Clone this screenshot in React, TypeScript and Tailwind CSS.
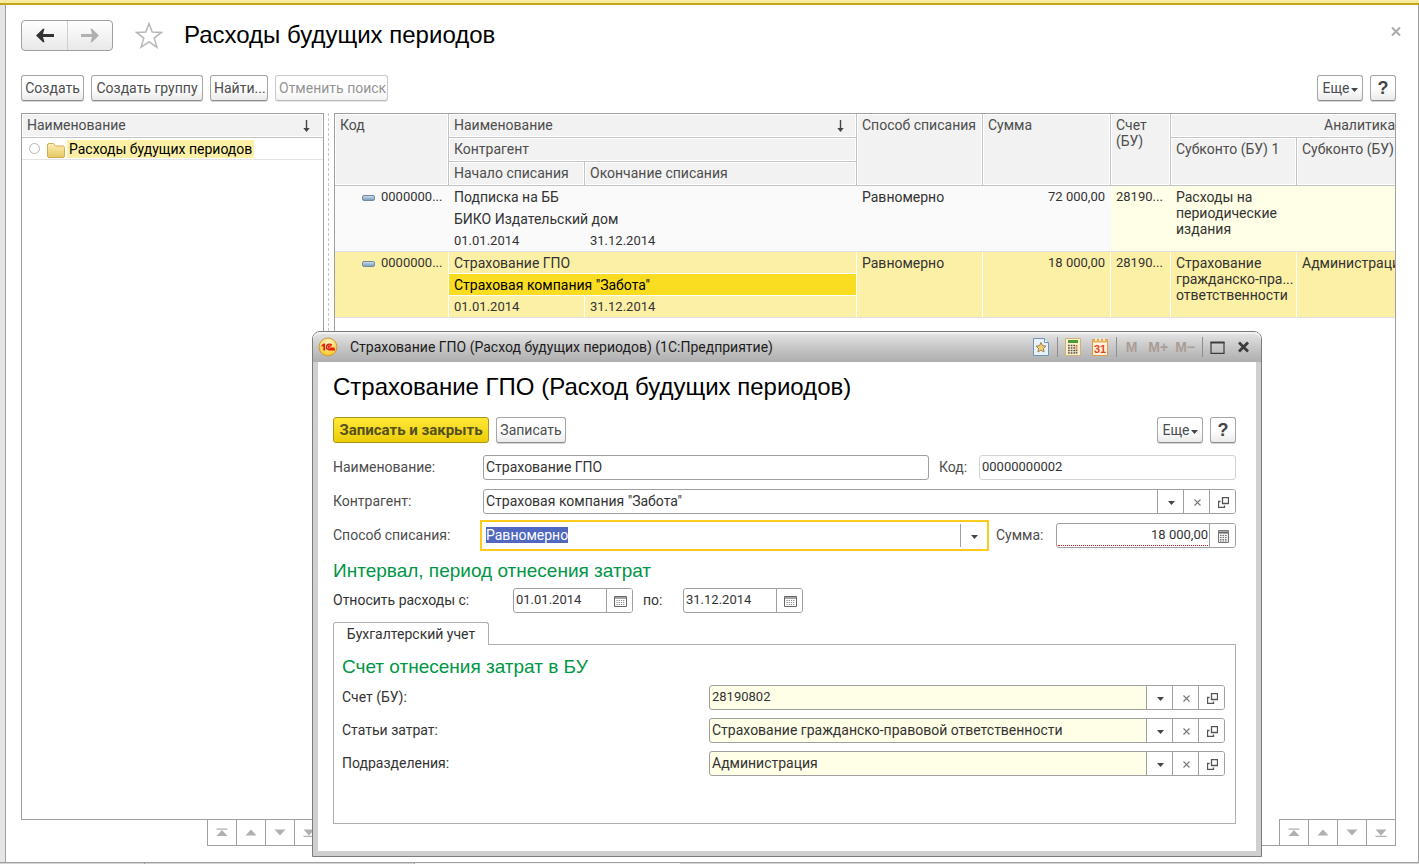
import { useEffect, useRef } from "react";
import type { ReactNode } from "react";

const toolButton =
  "h-[26px] shrink-0 whitespace-nowrap rounded-[3px] border border-[#a6a6a6] border-b-[#8e8e8e] bg-linear-to-b from-white from-50% to-[#ebebeb] px-[3px] text-[14px] leading-4 text-[#4d4d4d] shadow-[0_1px_0_#d4d4d4]";

const headCell =
  "border-r border-b border-[#c4c4c4] bg-[#f2f2f2] px-[5px] py-[3px] text-left align-top font-normal text-[#4d4d4d] shadow-[inset_0_0_0_1px_#ffffff]";

function DownMark({ className = "" }: { className?: string }) {
  return (
    <svg className={className} width="7" height="4" viewBox="0 0 7 4" aria-hidden="true">
      <path d="M0 0h7L3.5 4z" fill="#454545" />
    </svg>
  );
}

function ClearMark() {
  return (
    <svg width="7" height="7" viewBox="0 0 7 7" aria-hidden="true">
      <path d="M.5.5l6 6M6.500.5l-6 6" stroke="#777" strokeWidth="1.100" />
    </svg>
  );
}

function OpenMark() {
  return (
    <svg width="11" height="11" viewBox="0 0 11 11" fill="none" aria-hidden="true">
      <path d="M4.500.5h6v6h-6z" stroke="#555" strokeWidth="1.300" />
      <path d="M2.500 4.500h-2v6h6v-2" stroke="#555" strokeWidth="1.300" />
    </svg>
  );
}

function CalendarMark() {
  return (
    <svg width="13" height="11" viewBox="0 0 13 11" fill="none" aria-hidden="true">
      <path d="M.5.5h12v10H.5z" stroke="#666" />
      <path d="M1 2h11" stroke="#888" strokeWidth="1.500" />
      <path d="M2.500 4.500h8M2.500 6.500h8M2.500 8.500h8" stroke="#8a8a8a" strokeDasharray="1.200 1" />
    </svg>
  );
}

function CalculatorMark() {
  return (
    <svg width="11" height="13" viewBox="0 0 11 13" fill="none" aria-hidden="true">
      <path d="M.5.5h10v12H.5z" fill="#eee" stroke="#777" />
      <path d="M1 2.500h9" stroke="#666" strokeWidth="2" />
      <path d="M2 5.500h7M2 7.500h7M2 9.500h7M2 11h7" stroke="#777" strokeDasharray="1.500 1" />
    </svg>
  );
}

function SortArrow() {
  return (
    <svg className="mt-[3px] mr-px shrink-0" width="7" height="12" viewBox="0 0 7 12" fill="none" aria-hidden="true">
      <path d="M3.500 0v10" stroke="#454545" strokeWidth="1.400" />
      <path d="M.3 8h6.400L3.500 12z" fill="#454545" />
    </svg>
  );
}

function MoreButton() {
  return (
    <button type="button" className={`${toolButton} flex w-[46px] items-center justify-center`}>
      Еще
      <DownMark className="mt-1 ml-px" />
    </button>
  );
}

function HelpButton() {
  return (
    <button type="button" className={`${toolButton} w-[26px]`} aria-label="Справка">
      <span className="font-['Liberation_Sans',sans-serif] text-[18px] leading-5 font-bold text-[#444]">?</span>
    </button>
  );
}

function FieldButton({ label, children }: { label: string; children: ReactNode }) {
  return (
    <button
      type="button"
      aria-label={label}
      className="flex w-[26px] shrink-0 items-center justify-center border-l border-[#a0a0a0] bg-white pt-0.5 pl-0.5"
    >
      {children}
    </button>
  );
}

function Field({
  id,
  value,
  tone = "bg-white",
  edge = "border-[#a0a0a0]",
  size = "flex-1",
  textClass = "text-[14px]",
  children,
}: {
  id: string;
  value: string;
  tone?: string;
  edge?: string;
  size?: string;
  textClass?: string;
  children?: ReactNode;
}) {
  return (
    <div className={`flex h-[25px] min-w-0 overflow-hidden rounded-[3px] border ${edge} ${tone} ${size}`}>
      <input id={id} defaultValue={value} className={`min-w-0 flex-1 px-0.5 pb-px leading-4 text-[#333] outline-none ${textClass}`} />
      {children}
    </div>
  );
}

function LookupButtons() {
  return (
    <>
      <FieldButton label="Выбрать">
        <DownMark />
      </FieldButton>
      <FieldButton label="Очистить">
        <ClearMark />
      </FieldButton>
      <FieldButton label="Открыть">
        <OpenMark />
      </FieldButton>
    </>
  );
}

const pagerItems = [
  { label: "В начало", path: "M3.500 2.500h11v1.200h-11zM9 4l5.500 6h-11z" },
  { label: "Вверх", path: "M9 3.500l5.500 6h-11z" },
  { label: "Вниз", path: "M3.500 3.500h11L9 9.500z" },
  { label: "В конец", path: "M3.500 3.500h11L9 9.500zM3.500 9.800h11V11h-11z" },
];

function Pager({ className }: { className: string }) {
  return (
    <div className={`flex border-l border-[#a0a0a0] ${className}`}>
      {pagerItems.map((item) => (
        <button
          key={item.label}
          type="button"
          aria-label={item.label}
          className="flex h-[26px] w-[29px] items-center justify-center border-r border-b border-[#a0a0a0] bg-white"
        >
          <svg width="18" height="13" viewBox="0 0 18 13" aria-hidden="true">
            <path d={item.path} fill="#b0b0b0" />
          </svg>
        </button>
      ))}
    </div>
  );
}

function ItemMark() {
  return <span className="mr-[6px] inline-block h-[6px] w-[13px] rounded-[2px] border border-[#6f8ca6] bg-linear-to-b from-[#c9dbe8] to-[#7f9fba] align-middle" />;
}

function TreePanel() {
  return (
    <div className="flex w-[303px] shrink-0 flex-col">
      <div className="flex-1 border border-[#a0a0a0] text-[14px] leading-4">
        <div className={`flex h-6 justify-between ${headCell} border-r-0 pr-3`}>
          <span>Наименование</span>
          <SortArrow />
        </div>
        <div className="flex h-[22px] items-center border-b border-[#e4e4e4] pl-[7px]">
          <span className="h-[11px] w-[11px] rounded-full border border-[#b8b8b8]" />
          <svg className="mt-[3px] ml-[7px]" width="18" height="15" viewBox="0 0 18 15" aria-hidden="true">
            <defs>
              <linearGradient id="folder" x1="0" y1="0" x2="0" y2="1">
                <stop offset="0" stopColor="#fdf0b4" />
                <stop offset="1" stopColor="#e6c560" />
              </linearGradient>
            </defs>
            <path d="M.5 13V2q0-1.500 1.500-1.500h4.500L8.500 3H16q1.500 0 1.500 1.500V13q0 1.500-1.500 1.500H2Q.5 14.500.5 13z" fill="url(#folder)" stroke="#d2ac55" />
          </svg>
          <span className="ml-[2px] whitespace-nowrap bg-[#fcf0a6] px-[2px] py-px text-black">Расходы будущих периодов</span>
        </div>
      </div>
      <Pager className="-mt-px ml-auto border-t" />
    </div>
  );
}

const rows = [
  {
    code: "0000000...",
    name: "Подписка на ББ",
    partner: "БИКО Издательский дом",
    from: "01.01.2014",
    to: "31.12.2014",
    way: "Равномерно",
    sum: "72 000,00",
    account: "28190...",
    first: ["Расходы на", "периодические", "издания"],
    second: "",
    selected: false,
  },
  {
    code: "0000000...",
    name: "Страхование ГПО",
    partner: 'Страховая компания "Забота"',
    from: "01.01.2014",
    to: "31.12.2014",
    way: "Равномерно",
    sum: "18 000,00",
    account: "28190...",
    first: ["Страхование", "гражданско-пра...", "ответственности"],
    second: "Администрация",
    selected: true,
  },
];

function ExpensesTable() {
  return (
    <table className="w-[1214px] table-fixed border-separate border-spacing-0 text-[14px] leading-4 text-[#333]">
      <colgroup>
        <col className="w-[114px]" />
        <col className="w-[136px]" />
        <col className="w-[272px]" />
        <col className="w-[126px]" />
        <col className="w-[128px]" />
        <col className="w-[60px]" />
        <col className="w-[126px]" />
        <col className="w-[126px]" />
        <col className="w-[126px]" />
      </colgroup>
      <thead>
        <tr className="h-6">
          <th rowSpan={3} className={headCell}>Код</th>
          <th colSpan={2} className={headCell}>
            <div className="flex h-4 justify-between pr-[6px]">
              Наименование
              <SortArrow />
            </div>
          </th>
          <th rowSpan={3} className={`${headCell} whitespace-nowrap`}>Способ списания</th>
          <th rowSpan={3} className={headCell}>Сумма</th>
          <th rowSpan={3} className={headCell}>Счет (БУ)</th>
          <th colSpan={3} className={headCell}>
            <div className="text-center">Аналитика</div>
          </th>
        </tr>
        <tr className="h-6">
          <th colSpan={2} className={headCell}>Контрагент</th>
          <th rowSpan={2} className={`${headCell} whitespace-nowrap`}>Субконто (БУ) 1</th>
          <th rowSpan={2} className={`${headCell} whitespace-nowrap`}>Субконто (БУ) 2</th>
          <th rowSpan={2} className={headCell} />
        </tr>
        <tr className="h-6">
          <th className={headCell}>Начало списания</th>
          <th className={headCell}>Окончание списания</th>
        </tr>
      </thead>
      {rows.map((row) => {
        const base = row.selected ? "bg-[#fcf0a6] border-white" : "bg-[#fafafa] border-[#fafafa]";
        const tinted = row.selected ? "bg-[#fcf0a6] border-white" : "bg-[#fffee6] border-[#fffee6]";
        const cell = "border-r px-[5px] pt-[3px] align-top whitespace-nowrap";
        const last = "border-b border-b-[#e0e0e0]";
        return (
          <tbody key={row.name}>
            <tr className="h-[22px]">
              <td rowSpan={3} className={`${cell} ${base} ${last} pl-[27px] text-[13px]`}>
                <ItemMark />
                {row.code}
              </td>
              <td colSpan={2} className={`${cell} ${base} border-b`}>{row.name}</td>
              <td rowSpan={3} className={`${cell} ${base} ${last}`}>{row.way}</td>
              <td rowSpan={3} className={`${cell} ${base} ${last} text-right text-[13px]`}>{row.sum}</td>
              <td rowSpan={3} className={`${cell} ${tinted} ${last} text-[13px]`}>{row.account}</td>
              <td rowSpan={3} className={`${cell} ${tinted} ${last}`}>
                {row.first.map((line) => (
                  <div key={line}>{line}</div>
                ))}
              </td>
              <td rowSpan={3} className={`${cell} ${tinted} ${last}`}>{row.second}</td>
              <td rowSpan={3} className={`${cell} ${tinted} ${last}`} />
            </tr>
            <tr className="h-[22px]">
              <td
                colSpan={2}
                className={`${cell} border-b ${row.selected ? "border-white bg-[#fadc20] text-black" : base}`}
              >
                {row.partner}
              </td>
            </tr>
            <tr className="h-[22px]">
              <td className={`${cell} ${base} ${last} text-[13px]`}>{row.from}</td>
              <td className={`${cell} ${base} ${last} text-[13px]`}>{row.to}</td>
            </tr>
          </tbody>
        );
      })}
    </table>
  );
}

function TitleBarDivider() {
  return <span className="h-5 w-px bg-[#8f8f8f]" />;
}

function DialogTitleBar() {
  const memory = "font-['Liberation_Sans',sans-serif] text-[14px] font-bold text-[#a99d96]";
  return (
    <div className="flex h-[30px] items-center rounded-t-[7px] bg-linear-to-b from-[#e6e6e6] via-[#c8c8c8] to-[#aeaeb0] pr-[11px] pl-[5px] shadow-[inset_0_2px_0_#f2f2f2]">
      <svg width="20" height="20" viewBox="0 0 20 20" aria-hidden="true">
        <defs>
          <radialGradient id="logo" cx=".5" cy=".3" r=".7">
            <stop offset="0" stopColor="#fffbd0" />
            <stop offset="1" stopColor="#f6c21c" />
          </radialGradient>
        </defs>
        <circle cx="10" cy="10" r="9" fill="url(#logo)" stroke="#c79a4a" />
        <path d="M3.500 8.200l2.300-1.700h1.300v7H5.300V9L3.500 9.700z" fill="#e02010" />
        <path d="M13.800 8.300Q12.800 7 11 7.200 8.500 7.500 8.500 10t2.500 2.700h6M13.500 9.300Q12.500 8.600 11.300 9q-1 .4-.8 1.300.2.900 1.500.9h4.500" fill="none" stroke="#e02010" strokeWidth="1.400" />
      </svg>
      <span className="ml-3 text-[14px] text-[#1c1c1c]">Страхование ГПО (Расход будущих периодов) (1С:Предприятие)</span>
      <div className="ml-auto flex items-center">
        <button type="button" aria-label="Добавить в избранное" className="mr-2">
          <svg width="16" height="18" viewBox="0 0 16 18" aria-hidden="true">
            <path d="M.5.5h11l4 4v13H.5z" fill="#e9f2fa" stroke="#6f93b5" />
            <path d="M11.500.5v4h4" fill="#fff" stroke="#6f93b5" />
            <path d="M8 4.500l1.500 3.200 3.500.4-2.600 2.400.7 3.500L8 12.200 4.900 14l.7-3.500L3 8.100l3.500-.4z" fill="#f3cf72" stroke="#8a6b3a" strokeWidth=".8" />
          </svg>
        </button>
        <TitleBarDivider />
        <button type="button" aria-label="Калькулятор" className="ml-[7px]">
          <svg width="16" height="18" viewBox="0 0 16 18" aria-hidden="true">
            <path d="M.5.5h15v17H.5z" fill="#fbeecb" stroke="#cdb27a" />
            <path d="M3 2h10v3H3z" fill="#4b9a35" />
            <path d="M3 7.500h7M3 10h7M3 12.500h7M3 15h7" stroke="#5a5248" strokeWidth="1.400" strokeDasharray="1.700 1" />
            <path d="M11.500 7v3.500" stroke="#e05030" strokeWidth="1.700" strokeDasharray="1.500 .8" />
            <path d="M11.500 11.500v4" stroke="#5a5248" strokeWidth="1.700" strokeDasharray="1.700 .8" />
          </svg>
        </button>
        <button type="button" aria-label="Календарь" className="ml-[11px]">
          <svg width="16" height="18" viewBox="0 0 16 18" aria-hidden="true">
            <path d="M.5 1.500h15v16H.5z" fill="#fff1dc" stroke="#dc9a4a" />
            <path d="M.5 1.500h15v3H.5z" fill="#e8b25c" />
            <path d="M4 0v3M8 0v3M12 0v3" stroke="#fff6e0" strokeWidth="1.500" />
            <text x="8" y="15" textAnchor="middle" fontFamily="Liberation Sans, sans-serif" fontSize="11" fontWeight="bold" fill="#e0482a">31</text>
          </svg>
        </button>
        <span className="ml-2" />
        <TitleBarDivider />
        <button type="button" className={`ml-[9px] ${memory}`}>M</button>
        <button type="button" className={`ml-[11px] ${memory}`}>M+</button>
        <button type="button" className={`ml-[7px] ${memory}`}>M−</button>
        <span className="ml-[7px]" />
        <TitleBarDivider />
        <button type="button" aria-label="Развернуть" className="ml-[7px]">
          <svg width="15" height="13" viewBox="0 0 15 13" aria-hidden="true">
            <path d="M1 1.500h13v10.800H1z" fill="none" stroke="#3c3c3c" strokeWidth="1.200" />
            <path d="M.5 1.500h14" stroke="#3c3c3c" strokeWidth="2" />
          </svg>
        </button>
        <button type="button" aria-label="Закрыть" className="ml-[12px]">
          <svg width="13" height="12" viewBox="0 0 13 12" aria-hidden="true">
            <path d="M2 1.500l9 9M11 1.500l-9 9" stroke="#3c3c3c" strokeWidth="2.800" />
          </svg>
        </button>
      </div>
    </div>
  );
}

const accountFields = [
  { id: "account", label: "Счет (БУ):", value: "28190802", textClass: "text-[13px]" },
  { id: "cost-item", label: "Статьи затрат:", value: "Страхование гражданско-правовой ответственности", textClass: "text-[14px]" },
  { id: "division", label: "Подразделения:", value: "Администрация", textClass: "text-[14px]" },
];

const sectionTitle = "font-['Liberation_Sans',sans-serif] text-[19px] leading-6 text-[#009646]";
const labelText = "shrink-0 pb-px";

function ExpenseDialog() {
  const way = useRef<HTMLInputElement>(null);
  useEffect(() => {
    way.current?.focus({ preventScroll: true });
    way.current?.select();
  }, []);

  return (
    <section
      role="dialog"
      aria-labelledby="dialog-title"
      className="absolute top-[331px] left-[312px] w-[950px] rounded-t-lg border border-[#7c7c7c] bg-[#cfcfcf]"
    >
      <DialogTitleBar />
      <form className="mx-[5px] mb-[5px] bg-white pt-[9px] pr-5 pb-[27px] pl-[15px] text-[14px] leading-4 text-[#4d4d4d]">
        <h2 id="dialog-title" className="font-['Liberation_Sans',sans-serif] text-[24px] leading-8 text-black">
          Страхование ГПО (Расход будущих периодов)
        </h2>
        <div className="mt-[14px] flex gap-[7px]">
          <button
            type="button"
            className="h-[26px] w-[156px] whitespace-nowrap rounded-[3px] border border-[#a8961c] bg-linear-to-b from-[#ffe834] to-[#eccd00] text-[15px] font-bold text-[#55501c]"
          >
            Записать и закрыть
          </button>
          <button type="button" className={`${toolButton} w-[70px]`}>Записать</button>
          <div className="ml-auto flex gap-[7px]">
            <MoreButton />
            <HelpButton />
          </div>
        </div>

        <div className="mt-3 flex flex-col gap-[9px]">
          <div className="flex items-center">
            <label htmlFor="name" className={`w-[150px] ${labelText}`}>Наименование:</label>
            <Field id="name" value="Страхование ГПО" />
            <label htmlFor="code" className={`ml-[10px] w-10 ${labelText}`}>Код:</label>
            <Field id="code" value="00000000002" size="w-[257px]" edge="border-[#d4d4d4]" textClass="text-[13px]" />
          </div>
          <div className="flex items-center">
            <label htmlFor="partner" className={`w-[150px] ${labelText}`}>Контрагент:</label>
            <Field id="partner" value={'Страховая компания "Забота"'}>
              <LookupButtons />
            </Field>
          </div>
          <div className="flex items-center">
            <label htmlFor="way" className={`w-[150px] ${labelText}`}>Способ списания:</label>
            <div className="flex h-[25px] min-w-0 flex-1 bg-white py-px outline-2 outline-offset-1 outline-[#fccb1c]">
              <input
                id="way"
                ref={way}
                role="combobox"
                aria-expanded="false"
                aria-controls="way"
                defaultValue="Равномерно"
                className="min-w-0 flex-1 px-[3px] pb-px text-[14px] leading-4 text-[#333] outline-none selection:bg-[#5068c0] selection:text-white"
              />
              <FieldButton label="Выбрать">
                <DownMark />
              </FieldButton>
            </div>
            <label htmlFor="sum" className={`ml-[10px] w-[60px] ${labelText}`}>Сумма:</label>
            <div className="flex h-[25px] w-[180px] shrink-0 overflow-hidden rounded-[3px] border border-[#a0a0a0]">
              <input
                id="sum"
                defaultValue="18 000,00"
                className="mx-px mb-px min-w-0 flex-1 border-b border-dotted border-[#d02020] text-right text-[13px] leading-4 text-[#333] outline-none"
              />
              <FieldButton label="Калькулятор">
                <CalculatorMark />
              </FieldButton>
            </div>
          </div>
        </div>

        <h3 className={`mt-[11px] ${sectionTitle}`}>Интервал, период отнесения затрат</h3>
        <div className="mt-[5px] flex items-center text-[#333]">
          <label htmlFor="from" className={`w-[180px] ${labelText}`}>Относить расходы с:</label>
          <Field id="from" value="01.01.2014" size="w-[120px]" textClass="text-[13px]">
            <FieldButton label="Выбрать дату начала">
              <CalendarMark />
            </FieldButton>
          </Field>
          <label htmlFor="to" className={`ml-[10px] w-10 ${labelText}`}>по:</label>
          <Field id="to" value="31.12.2014" size="w-[120px]" textClass="text-[13px]">
            <FieldButton label="Выбрать дату окончания">
              <CalendarMark />
            </FieldButton>
          </Field>
        </div>

        <div role="tablist" className="mt-[9px] flex">
          <button
            type="button"
            role="tab"
            aria-selected="true"
            className="relative -mb-px h-[23px] w-[156px] whitespace-nowrap rounded-t-[3px] border border-b-0 border-[#b0b0b0] bg-white text-[#333]"
          >
            Бухгалтерский учет
          </button>
        </div>
        <div role="tabpanel" className="border border-[#b0b0b0] pt-[10px] pr-[10px] pb-[47px] pl-2">
          <h3 className={sectionTitle}>Счет отнесения затрат в БУ</h3>
          <div className="mt-[6px] flex flex-col gap-2">
            {accountFields.map((field) => (
              <div key={field.id} className="flex items-center text-[#333]">
                <label htmlFor={field.id} className={`w-[367px] ${labelText}`}>{field.label}</label>
                <Field id={field.id} value={field.value} tone="bg-[#fffee6]" textClass={field.textClass}>
                  <LookupButtons />
                </Field>
              </div>
            ))}
          </div>
        </div>
      </form>
    </section>
  );
}

export default function App() {
  return (
    <div className="relative flex min-h-screen flex-col overflow-hidden bg-white font-['Roboto','Liberation_Sans',sans-serif]">
      <div className="h-[5px] shrink-0 border-b-2 border-[#c0a41c] bg-[#f9eb9f]" />
      <div className="flex flex-1 border-r border-[#a0a0a0]">
        <div className="w-[6px] shrink-0 border-r border-[#a0a0a0] bg-[#e5e5e5]" />
        <main className="flex min-w-0 flex-1 flex-col pt-[15px] pr-[22px] pb-4 pl-[15px]">
          <header className="flex h-[31px] items-center">
            <div className="flex h-[31px] overflow-hidden rounded-[4px] border border-[#a0a0a0] bg-linear-to-b from-white to-[#e8e8e8]">
              <button type="button" aria-label="Назад" className="flex w-[46px] items-center justify-center border-r border-[#cfcfcf]">
                <svg width="18" height="15" viewBox="0 0 18 15" aria-hidden="true">
                  <path d="M0 7.500L7 .8h1.500L7 5.900h11v3.200H7l1.500 5.100H7z" fill="#333" />
                </svg>
              </button>
              <button type="button" aria-label="Вперед" className="flex w-[44px] items-center justify-center">
                <svg width="18" height="15" viewBox="0 0 18 15" aria-hidden="true">
                  <path d="M18 7.500L11 .8H9.500L11 5.900H0v3.200h11l-1.500 5.100H11z" fill="#b0b0b0" />
                </svg>
              </button>
            </div>
            <button type="button" aria-label="Избранное" className="ml-[22px]">
              <svg width="28" height="27" viewBox="0 0 28 27" aria-hidden="true">
                <path d="M14 1.500l3.200 8.600 9.300.3-7.300 5.700 2.700 9-7.900-5.300-7.900 5.300 2.700-9-7.300-5.700 9.300-.3z" fill="#fff" stroke="#b8b8b8" strokeWidth="1.500" />
              </svg>
            </button>
            <h1 className="ml-[21px] pb-0.5 font-['Liberation_Sans',sans-serif] text-[24px] leading-8 text-black">Расходы будущих периодов</h1>
            <button type="button" aria-label="Закрыть" className="mr-[-5px] mb-2 ml-auto">
              <svg width="10" height="9" viewBox="0 0 10 9" aria-hidden="true">
                <path d="M1 .5l8 8M9 .5l-8 8" stroke="#aaa" strokeWidth="2" />
              </svg>
            </button>
          </header>

          <div className="mt-6 flex gap-[7px]">
            <button type="button" className={`${toolButton} w-[63px]`}>Создать</button>
            <button type="button" className={`${toolButton} w-[112px]`}>Создать группу</button>
            <button type="button" className={`${toolButton} w-[58px]`}>Найти...</button>
            <button type="button" disabled className={`${toolButton} w-[113px] opacity-60`}>Отменить поиск</button>
            <div className="ml-auto flex gap-[7px]">
              <MoreButton />
              <HelpButton />
            </div>
          </div>

          <div className="mt-3 flex flex-1">
            <TreePanel />
            <div className="mx-1 w-px border-l border-dashed border-[#c8c8c8]" />
            <div className="ml-px flex min-w-0 flex-1 flex-col justify-between overflow-hidden border border-[#a0a0a0]">
              <ExpensesTable />
              <Pager className="-mr-px -mb-px ml-auto border-t" />
            </div>
          </div>
        </main>
      </div>
      <div className="flex h-[2px] shrink-0 border-t border-[#a0a0a0] bg-[#d4d4d4]">
        <span className="w-[145px] border-r border-[#a0a0a0]" />
        <span className="w-[270px] border-r border-[#a0a0a0]" />
        <span className="w-[265px] bg-[#f4f4f4]" />
      </div>
      <ExpenseDialog />
    </div>
  );
}
